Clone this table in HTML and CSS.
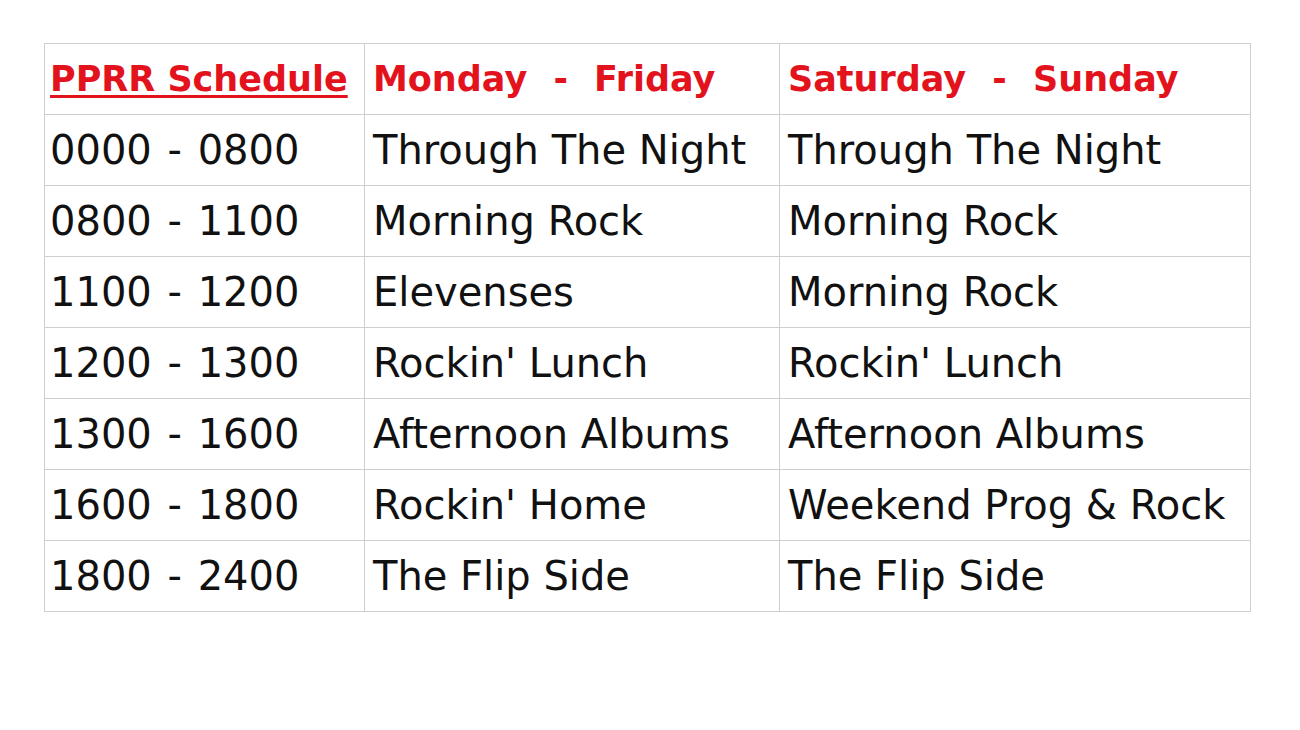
FILE: index.html
```html
<!DOCTYPE html>
<html>
<head>
<meta charset="utf-8">
<title>PPRR Schedule</title>
<link rel="stylesheet" href="styles.css">
</head>
<body>
<div class="page">
<table class="schedule">
  <colgroup>
    <col class="c1"><col class="c2"><col class="c3">
  </colgroup>
  <thead>
    <tr class="head">
      <th><span class="title">PPRR Schedule</span></th>
      <th>Monday - Friday</th>
      <th>Saturday - Sunday</th>
    </tr>
  </thead>
  <tbody>
    <tr><td class="time">0000 - 0800</td><td>Through The Night</td><td>Through The Night</td></tr>
    <tr><td class="time">0800 - 1100</td><td>Morning Rock</td><td>Morning Rock</td></tr>
    <tr><td class="time">1100 - 1200</td><td>Elevenses</td><td>Morning Rock</td></tr>
    <tr><td class="time">1200 - 1300</td><td>Rockin' Lunch</td><td>Rockin' Lunch</td></tr>
    <tr><td class="time">1300 - 1600</td><td>Afternoon Albums</td><td>Afternoon Albums</td></tr>
    <tr><td class="time">1600 - 1800</td><td>Rockin' Home</td><td>Weekend Prog &amp; Rock</td></tr>
    <tr><td class="time">1800 - 2400</td><td>The Flip Side</td><td>The Flip Side</td></tr>
  </tbody>
</table>
</div>
</body>
</html>
```
FILE: styles.css
```css
html, body {
  margin: 0;
  padding: 0;
  background: #ffffff;
}
.page {
  padding: 43px 0 0 44px;
}
.schedule {
  border-collapse: collapse;
  table-layout: fixed;
  width: 1206px;
  font-family: "DejaVu Sans", sans-serif;
  color: #111111;
}
.c1 { width: 320px; }
.c2 { width: 415px; }
.c3 { width: 471px; }
.schedule th,
.schedule td {
  border: 1px solid #cfcfcf;
  height: 71px;
  padding: 0 0 0 8px;
  box-sizing: border-box;
  text-align: left;
  vertical-align: middle;
  white-space: nowrap;
  overflow: hidden;
}
.schedule td {
  font-size: 40px;
  font-weight: normal;
}
.schedule td.time {
  padding-left: 5px;
  word-spacing: 3px;
}
.schedule th {
  font-size: 35px;
  font-weight: bold;
  color: #e3131e;
  word-spacing: 14px;
}
.schedule th:first-child {
  padding-left: 5px;
}
.title {
  word-spacing: 0;
  text-decoration: underline;
  text-decoration-thickness: 3px;
  text-underline-offset: 4px;
}
```
